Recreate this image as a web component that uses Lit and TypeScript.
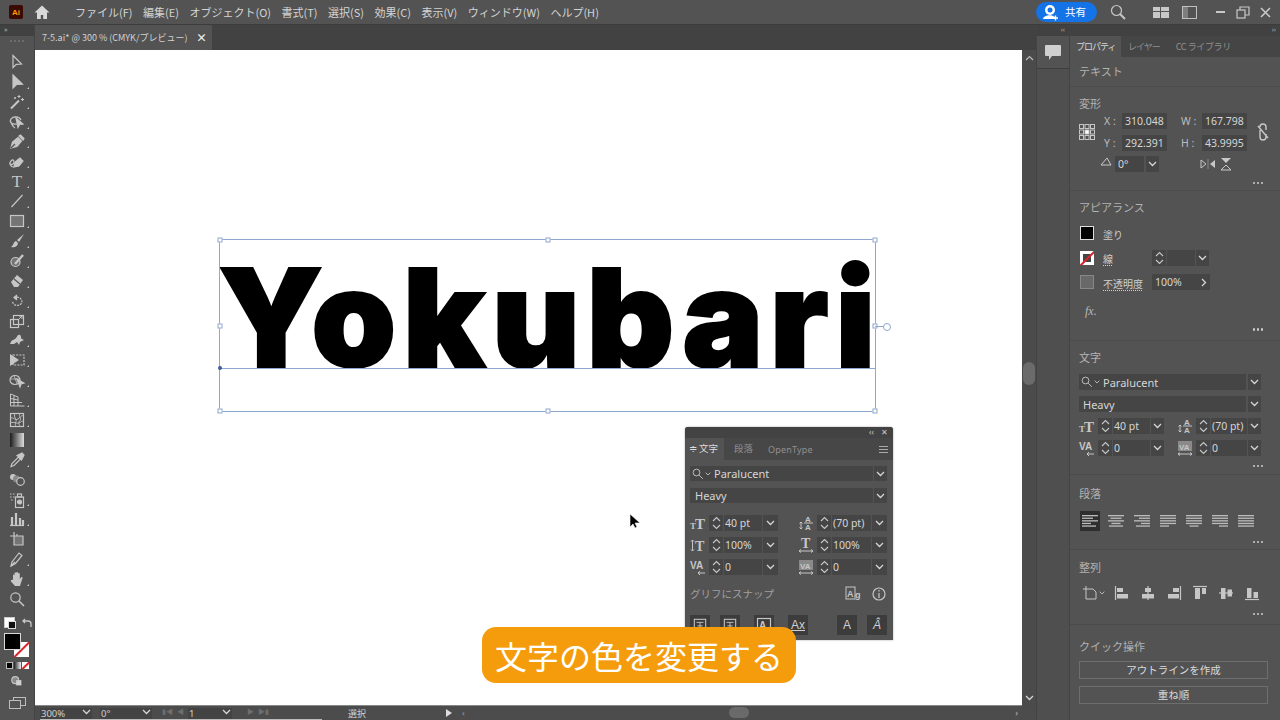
import { LitElement, html, css, svg } from "lit";
import { customElement } from "lit/decorators.js";

const G = "#c6c6c6";
const ic = (body: unknown, s = 16, vb = 16) =>
  html`<svg width=${s} height=${s} viewBox="0 0 ${vb} ${vb}" fill="none" stroke=${G} stroke-width="1.2">${body}</svg>`;

const chevron = html`<svg class="chev" width="9" height="6" viewBox="0 0 9 6" fill="none" stroke="#d6d6d6" stroke-width="1.3"><path d="M1 1l3.500 3.500L8 1"/></svg>`;
const spinner = html`<svg width="9" height="14" viewBox="0 0 9 14" fill="none" stroke="#c8c8c8" stroke-width="1.1"><path d="M1 5l3.500-3.500L8 5M1 9l3.500 3.500L8 9"/></svg>`;
const dots = html`<div class="dots"><i></i><i></i><i></i></div>`;
const serif = (x: number, y: number, size: number, t: string) =>
  svg`<text x=${x} y=${y} font-size=${size} font-family="Liberation Serif" font-weight="700" fill=${G} stroke="none">${t}</text>`;
const sans = (x: number, y: number, size: number, t: string) =>
  svg`<text x=${x} y=${y} font-size=${size} font-family="Liberation Sans" font-weight="700" fill=${G} stroke="none">${t}</text>`;

const fieldIcons = {
  size: ic(svg`${serif(0, 14, 9, "T")}${serif(5, 14, 15, "T")}`),
  lead: ic(svg`${sans(7, 7, 8, "A")}${sans(7, 15, 8, "A")}<path d="M6 8h9M3 7v7M1.500 8.500L3 7l1.500 1.500M1.500 12.500L3 14l1.500-1.500" stroke-width="1"/>`),
  vs: ic(svg`${serif(5, 14, 14, "T")}<path d="M2.500 3v11M1 4.500l1.500-1.500L4 4.500M1 12.500L2.500 14 4 12.500" stroke-width="1"/>`),
  hs: ic(svg`${serif(3, 11, 14, "T")}<path d="M1 14h14M3 12.500L1 14l2 1.500M13 12.500L15 14l-2 1.500" stroke-width="1"/>`),
  kern: ic(svg`${sans(0, 10, 10, "V")}${sans(6, 10, 10, "A")}<path d="M8 14h7M10 12l-2 2 2 2" stroke-width="1"/>`),
  track: ic(svg`<rect x="1" y="1" width="14" height="10" fill="#8a8a8a" stroke="none"/>${sans(2, 10, 8, "VA")}<path d="M1 14h14M3 12.500L1 14l2 1.500M13 12.500L15 14l-2 1.500" stroke-width="1"/>`),
};

const tools: [unknown, boolean][] = [
  [svg`<path d="M4 1.500v12l3.300-3.200 5.200-.300z"/>`, false],
  [svg`<path d="M4 1v13l3.500-3.500 6-.300z" fill=${G}/>`, true],
  [svg`<path d="M2 14.500l8-8" stroke-width="2"/><path d="M10 1v3M8.500 2.500h3M13.500 4v3M12 5.500h3M6 3v2M5 4h2" stroke-width="1"/>`, true],
  [svg`<path d="M8 10C3 11 0 8 2 5s8-3 10 1M3 9c-1 2 1 3 3 5"/><path d="M7 4l7 6-3.500.500-1.500 3z" fill=${G}/>`, true],
  [svg`<path d="M2 14l1.500-6L9 3.500l3.500 3.500L8 12.500z" fill=${G}/><path d="M10 2l1.500-1 3.500 3.500-1 1.500z" fill=${G}/><path d="M2 14l4-4" stroke="#535353"/>`, true],
  [svg`<path d="M5 14l1-5 5-4 3 3-4 5z" fill=${G}/><path d="M5 14C1 14 0 10 2 8s3-1 3 1-2 3-3 2"/>`, true],
  [svg`<text x="8" y="14" font-size="17" text-anchor="middle" font-family="Liberation Serif" fill=${G} stroke="none">T</text>`, true],
  [svg`<path d="M2.500 14L13.500 2"/>`, true],
  [svg`<rect x="1.500" y="2.500" width="13" height="11" fill="#747474"/>`, true],
  [svg`<path d="M15 1L8 7l2 2zM7 8C4 9 5 12 2 14c4 1 7-1 7-4z" fill=${G} stroke="none"/>`, true],
  [svg`<circle cx="6.500" cy="9" r="4.500" fill="#747474"/><path d="M6 11l8-9" stroke-width="2.400"/>`, true],
  [svg`<path d="M2 9l6-7 6 5-5 7H5z" fill=${G} stroke="none"/><path d="M5 6l6 5" stroke="#535353"/>`, true],
  [svg`<path d="M3.500 9A5 5 0 0 0 13 9a5 5 0 0 0-7-4.500" stroke-dasharray="2 1" /><path d="M8 2L5 4.500 8 7" fill=${G}/>`, true],
  [svg`<rect x="1.500" y="6.500" width="8" height="8"/><rect x="4.500" y="2.500" width="10" height="9"/><path d="M9 7l4-4M10 3h3v3" stroke-width="1"/>`, true],
  [svg`<path d="M1 12c2-6 4-3 6-6s2-4 4-3 0 3 2 4l2 1-2 1-2 1-1 3-2-3-3 2z" fill=${G} stroke="none"/>`, true],
  [svg`<rect x="4" y="3" width="11" height="10" stroke-dasharray="2 1.200"/><path d="M1 2l9 6-9 6z" fill=${G} stroke="none"/>`, true],
  [svg`<ellipse cx="6" cy="8" rx="5" ry="4.500"/><path d="M1.500 7h9M5 3.500l3 8"  stroke-width=".8"/><path d="M8 7l7 4-3 1-1 3z" fill=${G}/>`, true],
  [svg`<path d="M1.500 2v12h14M1.500 2L9 5v9M5 3.500V14M1.500 6.500L9 8M1.500 10.500H13" stroke-width="1"/>`, true],
  [svg`<rect x="1.500" y="1.500" width="13" height="13"/><path d="M1.500 6C5 5 6 9 9 7s3-4 5.500-3M1.500 11c4-2 5 1 8 0s3-2 5-2M6 1.500c-2 4 2 5 1 8s-1 3 0 5M11 1.500c-2 3 2 5 0 7s-1 4 0 6" stroke-width=".9"/>`, true],
  [svg`<defs><linearGradient id="gr"><stop offset="0" stop-color="#1c1c1c"/><stop offset="1" stop-color="#dcdcdc"/></linearGradient></defs><rect x="1" y="1" width="14" height="14" fill="url(#gr)" stroke="none"/>`, false],
  [svg`<path d="M2 14.500l1-3L9.500 5l2 2L5 13.500z"/><path d="M8 3.500L13 1l2 2-2.500 5z" fill=${G}/>`, true],
  [svg`<circle cx="4" cy="5" r="3" fill=${G} stroke="none"/><circle cx="7.500" cy="7" r="3.500" fill="#8a8a8a" stroke="none"/><circle cx="11.500" cy="9.500" r="3.800" fill="#535353"/>`, false],
  [svg`<rect x="6.500" y="5" width="8" height="10.500"/><circle cx="10.500" cy="10" r="2" fill=${G}/><rect x="8.500" y="2" width="4" height="3"/><path d="M1 2h1.500M4 2h1.500M1 5h1.500M4 5h1.500M2 8h1.500" stroke-width="1.200"/>`, true],
  [svg`<path d="M1 14.500h14" /><path d="M3 14V6M7 14V2M11 14V7M14 14V9" stroke-width="2.200"/>`, true],
  [svg`<path d="M5 1v4M1 5h4M8 3v2" /><path d="M5 5h9v9H5z" fill="#747474"/>`, false],
  [svg`<path d="M2 15l1-4L10 2l3 2.500-6.500 8z"/><path d="M2 15l4-4" />`, true],
  [svg`<path d="M4 9V4.500c0-1.300 1.500-1.300 1.500 0V2.500c0-1.400 1.800-1.400 1.800 0V2c0-1.300 1.800-1.300 1.800 0v1c0-1.200 1.700-1.200 1.700 0v5l1.200-1.500c1-1 2 0 1.400 1L11 15H6L2 10.500c-.8-1.300.8-2.500 2-1.500z" fill=${G} stroke="none"/>`, true],
  [svg`<circle cx="6.500" cy="6.500" r="4.700"/><path d="M10 10l5 5" stroke-width="1.600"/>`, false],
];

const menus = ["ファイル(F)", "編集(E)", "オブジェクト(O)", "書式(T)", "選択(S)", "効果(C)", "表示(V)", "ウィンドウ(W)", "ヘルプ(H)"];

const alignLines: number[][] = [
  [16, 11, 16, 9, 14],
  [16, 11, 16, 9, 14],
  [16, 11, 16, 9, 14],
  [16, 16, 16, 16, 9],
  [16, 16, 16, 16, 9],
  [16, 16, 16, 16, 9],
  [16, 16, 16, 16, 16],
];
const alignKind = ["l", "c", "r", "l", "c", "r", "l"];
const paraIcon = (i: number) => {
  const k = alignKind[i];
  return ic(
    alignLines[i].map((w, n) => {
      const x = k === "l" ? 0 : k === "c" ? (16 - w) / 2 : 16 - w;
      return svg`<rect x=${x} y=${2 + n * 2.6} width=${w} height="1.300" fill="#bcbcbc" stroke="none"/>`;
    }),
  );
};

const distIcons = [
  svg`<path d="M1.500 1v14" /><rect x="3" y="3" width="6" height="4" fill=${G} stroke="none"/><rect x="3" y="9" width="11" height="4.500" fill=${G} stroke="none"/>`,
  svg`<path d="M8 1v14"/><rect x="5" y="3" width="6" height="4" fill=${G} stroke="none"/><rect x="2" y="9" width="12" height="4.500" fill=${G} stroke="none"/>`,
  svg`<path d="M14.500 1v14"/><rect x="7" y="3" width="6" height="4" fill=${G} stroke="none"/><rect x="2" y="9" width="11" height="4.500" fill=${G} stroke="none"/>`,
  svg`<path d="M1 1.500h14"/><rect x="3" y="3" width="5" height="11" fill=${G} stroke="none"/><rect x="10" y="3" width="4" height="6" fill=${G} stroke="none"/>`,
  svg`<path d="M1 8h14"/><rect x="3" y="3" width="4.500" height="11" fill=${G} stroke="none"/><rect x="9.500" y="4.500" width="4.500" height="7" fill=${G} stroke="none"/>`,
  svg`<path d="M1 14.500h14"/><rect x="3" y="3" width="4.500" height="10" fill=${G} stroke="none"/><rect x="9.500" y="7" width="4.500" height="6" fill=${G} stroke="none"/>`,
];

const handles: [number, number][] = [
  [0, 0], [50, 0], [100, 0], [0, 50], [100, 50], [0, 100], [50, 100], [100, 100],
];

const magnify = html`<span class="mag">${ic(svg`<circle cx="6" cy="6" r="4.500"/><path d="M9.500 9.500l5 5"/>`, 12)}<svg width="6" height="4" viewBox="0 0 9 6" fill="none" stroke="#c8c8c8" stroke-width="1.300"><path d="M1 1l3.500 3.500L8 1"/></svg></span>`;

@customElement("app-root")
export class AppRoot extends LitElement {
  static styles = css`
    :host { display: block; width: 1280px; height: 720px; overflow: hidden; background: #535353; color: #cfcfcf;
      font-family: "Noto Sans", "Noto Sans CJK JP", sans-serif; font-size: 11px; line-height: 1; }
    * { box-sizing: border-box; }
    svg { display: block; flex: none; overflow: visible; }
    .menubar { height: 25px; display: flex; align-items: center; background: #535353; border-bottom: 1px solid #3c3c3c; }
    .logo { width: 14px; height: 14px; margin: 0 0 0 9px; border-radius: 2px; background: #3a0a03; color: #ff9a00; font: 700 8px "Liberation Sans", sans-serif; display: flex; align-items: center; justify-content: center; }
    .home { margin-left: 11px; margin-right: 25px; }
    .menus { display: flex; gap: 10.500px; font-size: 11px; color: #d4d4d4; font-family: "Noto Sans CJK JP", sans-serif; flex: 1; }
    .share { width: 61px; height: 20px; border-radius: 10px; background: #1473e6; display: flex; align-items: center; gap: 6px; padding-left: 6px; color: #fff; font-size: 10.500px; font-family: "Noto Sans CJK JP", sans-serif; }
    .topr { display: flex; align-items: center; }
    .m1 { margin-left: 13px; } .m2 { margin-left: 27px; } .m3 { margin-left: 13px; } .m4 { margin-left: 19px; } .m5 { margin-left: 8px; } .m6 { margin-left: 10px; margin-right: 9px; }
    .main { display: flex; height: 695px; }
    .toolbar { width: 35px; flex: none; display: flex; flex-direction: column; align-items: center; background: #535353; border-right: 1px solid #444; }
    .strip { height: 11px; flex: none; width: 100%; background: #414141; color: #aaa; font-size: 7px; padding: 1px 4px; align-self: stretch; }
    .strip.r { text-align: right; }
    .grip { height: 12px; flex: none; width: 14px; margin-top: 4px; border-top: 2px dotted #6d6d6d; }
    .tool { height: 19.900px; flex: none; width: 100%; display: flex; align-items: center; justify-content: center; position: relative; }
    .tool.more::after { content: ""; position: absolute; right: 5px; bottom: 3px; border: 1.500px solid transparent; border-right-color: #c6c6c6; border-bottom-color: #c6c6c6; }
    .colors { position: relative; flex: none; width: 35px; height: 45px; margin-top: 6px; }
    .mini1 { position: absolute; left: 4px; top: 2px; width: 11px; height: 11px; background: #fff; border: 1px solid #ccc; }
    .mini2 { position: absolute; left: 8px; top: 6px; width: 8px; height: 8px; background: #111; border: 1px solid #ddd; }
    .swap { position: absolute; left: 22px; top: 3px; }
    .stroke { position: absolute; left: 14px; top: 27px; width: 15px; height: 15px; background: #fff; overflow: hidden; }
    .stroke::after, .mini-none::after, .strokesw::after { content: ""; position: absolute; left: -4px; right: -4px; top: 50%; height: 2px; background: #d8272d; transform: rotate(-45deg); }
    .fill { position: absolute; left: 4px; top: 18px; width: 17px; height: 17px; background: #000; border: 1.500px solid #d8d8d8; }
    .minis { display: flex; gap: 1px; height: 7px; margin-top: 2px; flex: none; }
    .minis > * { width: 7px; height: 7px; position: relative; overflow: hidden; }
    .mini-b { background: #000; border: 1px solid #bbb; }
    .mini-g { background: linear-gradient(90deg, #222, #eee); }
    .mini-none { background: #fff; }
    .under { margin-top: 5px; flex: none; }
    .under2 { margin-top: 9px; flex: none; }
    .center { width: 1001px; flex: none; display: flex; flex-direction: column; }
    .tabs { height: 25px; display: flex; background: #424242; }
    .tab { width: 177px; background: #535353; display: flex; align-items: center; justify-content: space-between; padding: 0 5px 0 7px; font-size: 9px; font-family: "Noto Sans CJK JP", sans-serif; color: #d2d2d2; }
    .tab b { color: #eee; font-size: 11px; }
    .canvasrow { height: 656px; display: flex; }
    .canvas { flex: 1; background: #fff; position: relative; overflow: hidden; border-bottom: 1px solid #888; }
    .vscroll { width: 14px; flex: none; background: #4b4b4b; position: relative; display: flex; flex-direction: column; justify-content: space-between; align-items: center; padding: 5px 0; }
    .vthumb { position: absolute; left: 1px; top: 312px; width: 12px; height: 23px; background: #6b6b6b; border-radius: 6px; }
    .status { height: 14px; display: flex; background: #4c4c4c; position: relative; overflow: hidden; font-size: 9.500px; color: #d0d0d0; }
    .stl { width: 282px; margin-left: 5px; display: flex; align-items: flex-start; padding-top: 2px; border-bottom: 1px solid #bbb; }
    .stl .v { background: #434343; height: 11px; padding: 1px; display: flex; justify-content: space-between; }
    .v1 { width: 52px; margin-right: 8px; } .v2 { width: 52px; margin-right: 10px; } .v4 { width: 44px; margin-right: 15px; }
    .nav { display: flex; width: 24px; gap: 4px; margin-right: 2px; color: #6e6e6e; font-size: 7px; }
    .mode { width: 70px; text-align: center; font-size: 9px; padding-top: 3px; font-family: "Noto Sans CJK JP", sans-serif; }
    .tri { width: 0; height: 0; border: 4px solid transparent; border-left: 6px solid #ddd; margin: 3px 0 0 54px; }
    .lt { color: #999; margin: 2px 0 0 6px; font-size: 9px; }
    .hthumb { position: absolute; left: 694px; top: 1px; width: 20px; height: 11px; border-radius: 6px; background: #6a6a6a; }
    .hr { position: absolute; right: 18px; top: 2px; color: #bdbdbd; font-size: 9px; }
    .dock { width: 34px; flex: none; background: #4f4f4f; border-left: 1px solid #434343; border-right: 1px solid #434343; }
    .cmt { height: 33px; background: #535353; border-bottom: 1px solid #3e3e3e; display: flex; align-items: center; justify-content: center; }
    .panel { width: 210px; flex: none; background: #535353; }
    .ptabs { height: 21px; background: #454545; display: flex; align-items: center; font-family: "Noto Sans CJK JP", sans-serif; font-size: 9px; color: #8f8f8f; white-space: nowrap; letter-spacing: -1px; }
    .ptab { height: 100%; flex: none; display: flex; align-items: center; padding: 0 6px; }
    .ptab.on { background: #535353; color: #d8d8d8; width: 51px; margin-right: 1px; padding: 0 0 0 6px; }
    .ptab.lib { padding-left: 7px; margin-left: 3px; padding-right: 9px; letter-spacing: -.4px; }
    .sec { padding: 8px 19px 0 9px; border-bottom: 1px solid #4b4b4b; }
    .h { height: 16px; display: flex; align-items: center; color: #b2b2b2; font-size: 11px; font-family: "Noto Sans CJK JP", sans-serif; }
    .s0 { height: 30px; padding-top: 6px; }
    .s1 { height: 104px; } .s2 { height: 150px; } .s3 { height: 134px; }
    .s4 { height: 75px; padding-top: 10px; } .s5 { height: 75px; padding-top: 9px; } .s6 { padding: 13px 12px 0 9px; border: 0; }
    .dots { display: flex; justify-content: flex-end; gap: 1.500px; height: 8px; align-items: center; margin-right: -2px; }
    .dots i { width: 2.500px; height: 2.500px; border-radius: 50%; background: #cdcdcd; }
    .inp { background: #454545; height: 16px; display: flex; align-items: center; padding-left: 3px; color: #d6d6d6; font-size: 10.500px; white-space: nowrap; overflow: hidden; }
    .tf { display: grid; grid-template-columns: 16px 27px 45px 14px 21px 45px 22px; align-items: center; margin-top: 2px; row-gap: 6px; }
    .tfref { grid-row: 1 / 3; }
    .lb { color: #bcbcbc; padding-left: 9px; white-space: nowrap; font-size: 10.500px; }
    .lb2 { color: #bcbcbc; white-space: nowrap; font-size: 10.500px; }
    .link { grid-row: 1 / 3; grid-column: 7; justify-self: end; }
    .tf3 { display: flex; align-items: center; margin: 5px 0 7px 21px; height: 16px; }
    .tf3 .ang { margin-bottom: 5px; }
    .tf3 .a { width: 29px; margin-left: 3px; }
    .dd { width: 13px; height: 16px; background: #454545; display: flex; align-items: center; justify-content: center; }
    .tf3 .dd { margin-left: 2px; margin-right: 41px; }
    .flip { margin-right: 4px; }
    .ar { display: flex; align-items: center; height: 24.500px; position: relative; }
    .ar.first { margin-top: 6px; }
    .sw { width: 14px; height: 14px; background: #000; border: 1px solid #ddd; margin-left: 1px; }
    .strokesw { width: 14px; height: 14px; background: #fff; position: relative; overflow: hidden; margin-left: 1px; }
    .strokesw i { position: absolute; inset: 3px; background: #454545; }
    .opsw { width: 14px; height: 14px; background: #696969; border: 1px solid #888; margin-left: 1px; }
    .al { margin-left: 9px; width: 49px; color: #cfcfcf; font-size: 10px; font-family: "Noto Sans CJK JP", sans-serif; padding-top: 3px; white-space: nowrap; }
    .ul { text-decoration: underline dotted; text-underline-offset: 2px; }
    .sp { width: 14px; height: 16px; background: #454545; display: flex; align-items: center; justify-content: center; }
    .blank { width: 28px; height: 16px; background: #454545; margin: 0 1px; }
    .pct { width: 45px; background: #454545; }
    .fx { font: italic 12px "Liberation Serif", serif; color: #b8b8b8; margin: 7px 0 4px 6px; height: 20px; display: flex; align-items: center; }
    .frow { display: grid; grid-template-columns: 1fr 13px; gap: 2px; margin-top: 6px; }
    .frow.first { margin-top: 9px; }
    .frow .inp { padding-left: 2px; font-size: 11px; }
    .frow .st { padding-left: 4px; }
    .mag { display: flex; align-items: center; gap: 1px; margin-right: 3px; }
    .fgrid { display: grid; grid-template-columns: 85px 84px; column-gap: 13px; row-gap: 6px; margin: 6px 0 0; }
    .fld { display: grid; grid-template-columns: 18px 14px 1fr 13px; column-gap: 1px; align-items: center; }
    .fld .inp { padding-left: 1px; }
    .d1 { margin-top: 6px; }
    .alrow { display: flex; height: 20px; margin-top: 10px; align-items: center; gap: 6px; margin-left: 1px; width: 182px; }
    .alrow .on { background: #2e2e2e; }
    .alcell { width: 20px; height: 20px; display: flex; align-items: center; justify-content: center; }
    .alrow.d { margin-top: 8px; margin-left: 3px; }
    .dtop { display: flex; align-items: center; gap: 1px; width: 24px; }
    .d2 { margin-top: 7px; }
    .btn { height: 18px; border: 1px solid #6e6e6e; display: flex; align-items: center; justify-content: center; color: #dadada; font-size: 10.500px; font-family: "Noto Sans CJK JP", sans-serif; margin-top: 7px; }
    .yk { position: absolute; left: 183px; top: 200px; font: 900 136px/1 "Inter", sans-serif; letter-spacing: 6.500px; color: #000; white-space: nowrap; -webkit-text-stroke: 2px #000; }
    .box { position: absolute; left: 184px; top: 189px; width: 657px; height: 173px; border: 1px solid #8ea8cf; }
    .base { position: absolute; left: 0; right: 0; top: 128px; height: 1px; background: #8ea8cf; }
    .pt { position: absolute; left: -2px; top: 126px; width: 4px; height: 4px; border-radius: 50%; background: #3f5a9e; }
    .hd { position: absolute; width: 5px; height: 5px; background: #fff; border: 1px solid #8ea8cf; transform: translate(-50%, -50%); }
    .rot { position: absolute; left: 100%; top: 50%; width: 10px; height: 1px; background: #8ea8cf; }
    .rot::after { content: ""; position: absolute; left: 8px; top: -3px; width: 6px; height: 6px; border: 1px solid #8ea8cf; border-radius: 50%; background: #fff; }
    .cursor { position: absolute; left: 594px; top: 463px; }
    .float { position: absolute; left: 650px; top: 377px; width: 208px; height: 213px; background: #535353; border-radius: 3px 3px 0 0; box-shadow: 0 0 2px rgba(0,0,0,.4); }
    .ftitle { height: 11px; background: #434343; border-radius: 3px 3px 0 0; display: flex; justify-content: flex-end; gap: 7px; padding: 1px 5px 0 0; color: #ccc; font-size: 8px; }
    .ftabs { height: 22px; background: #474747; display: flex; align-items: center; color: #8f8f8f; font-size: 9.500px; font-family: "Noto Sans CJK JP", sans-serif; white-space: nowrap; }
    .ftab { height: 100%; display: flex; align-items: center; padding: 0 10px; }
    .ftab.on { background: #535353; color: #dcdcdc; width: 39px; padding: 0 0 0 4px; gap: 2px; }
    .ftab.ot { font-family: "Noto Sans", sans-serif; letter-spacing: .2px; padding: 0 0 0 5px; font-size: 9px; }
    .burger { margin-left: auto; margin-right: 5px; width: 9px; height: 7px; border-top: 1px solid #aaa; border-bottom: 1px solid #aaa; position: relative; }
    .burger::after { content: ""; position: absolute; left: 0; right: 0; top: 2px; height: 1px; background: #aaa; }
    .fb { padding: 6px 6px 0 5px; }
    .ffr { display: grid; grid-template-columns: 1fr 13px; gap: 1px; margin-bottom: 7px; height: 15px; }
    .ffr .inp { height: 15px; font-size: 11px; padding-left: 2px; }
    .ffr .st { padding-left: 5px; }
    .ffr .dd { height: 15px; }
    .fg2 { display: grid; grid-template-columns: 88px 89px; column-gap: 20px; row-gap: 6px; margin-top: 12px; }
    .fg2 .fld { grid-template-columns: 18px 14px 1fr 15px; }
    .fg2 .dd { width: 15px; }
    .snap { display: flex; align-items: center; margin-top: 11px; height: 16px; color: #9f9f9f; font-family: "Noto Sans CJK JP", sans-serif; font-size: 10.500px; }
    .snap span { flex: 1; }
    .snap svg { margin-left: 10px; }
    .gly { display: flex; margin-top: 13px; }
    .g { width: 20px; height: 20px; background: #3c3c3c; color: #cfcfcf; display: flex; align-items: center; justify-content: center; font: 12px "Liberation Sans", sans-serif; }
    .ga { margin-right: 10px; } .gb { margin-right: 14px; } .gc { margin-right: 29px; }
    .cap { position: absolute; left: 447px; top: 577px; width: 314px; height: 56px; background: #f59c0d; border-radius: 14px; color: #fff; display: flex; align-items: center; justify-content: center; font-size: 32px; font-family: "Noto Sans CJK JP", sans-serif; font-weight: 400; }
  `;

  field(icon: unknown, val: string) {
    return html`<div class="fld">${icon}<div class="sp">${spinner}</div><div class="inp">${val}</div><div class="dd">${chevron}</div></div>`;
  }

  render() {
    return html`
      <div class="menubar">
        <div class="logo">Ai</div>
        <div class="home">${ic(svg`<path d="M8 1.500L.5 8.500h2.500V15h3.800v-4h2.400v4H13V8.500h2.500z" fill="#d8d8d8" stroke="none"/>`)}</div>
        <div class="menus">${menus.map((m) => html`<span>${m}</span>`)}</div>
        <div class="topr">
          <div class="share">
            <svg width="17" height="17" viewBox="0 0 17 17"><circle cx="8" cy="6" r="5" fill="#fff"/><path d="M1 15c1-5 12-5 13 0z" fill="#fff"/><circle cx="8" cy="6" r="2.500" fill="#1473e6"/><path d="M11 14h5M13.500 11.500v5" stroke="#fff" stroke-width="1.400"/></svg>
            共有
          </div>
          <div class="m1">${ic(svg`<circle cx="6.500" cy="6.500" r="5"/><path d="M10 10l5 5" stroke-width="2"/>`, 16)}</div>
          <svg class="m2" width="16" height="12" viewBox="0 0 16 12"><path d="M0 1h7v4H0zM8 1h8v4H8zM0 6h7v6H0zM8 6h8v6H8z" fill="#c8c8c8"/></svg>
          <svg class="m3" width="15" height="13" viewBox="0 0 15 13"><rect x=".5" y=".5" width="14" height="12" fill="none" stroke="#c0c0c0"/><rect x="1" y="1" width="5" height="11" fill="#c0c0c0" opacity=".4"/></svg>
          <svg class="m4" width="12" height="3" viewBox="0 0 12 3"><rect width="9" height="2" fill="#c8c8c8"/></svg>
          <svg class="m5" width="14" height="13" viewBox="0 0 14 13" fill="none" stroke="#c8c8c8" stroke-width="1.200"><rect x="1" y="4" width="8" height="8"/><path d="M4 4V1h9v8h-4"/></svg>
          <svg class="m6" width="11" height="11" viewBox="0 0 11 11" fill="none" stroke="#c8c8c8" stroke-width="1.600"><path d="M1 1l9 9M10 1l-9 9"/></svg>
        </div>
      </div>
      <div class="main">
        <div class="toolbar">
          <div class="strip">»</div>
          <div class="grip"></div>
          ${tools.map(([b, more]) => html`<div class="tool ${more ? "more" : ""}">${ic(b, 16)}</div>`)}
          <div class="colors">
            <div class="mini1"></div><div class="mini2"></div>
            <svg class="swap" width="10" height="10" viewBox="0 0 10 10" fill="none" stroke="#c8c8c8" stroke-width="1.300"><path d="M1 3h5a3 3 0 0 1 3 3v3M3 1L1 3l2 2"/></svg>
            <div class="stroke"></div>
            <div class="fill"></div>
          </div>
          <div class="minis"><div class="mini-b"></div><div class="mini-g"></div><div class="mini-none"></div></div>
          <div class="under">${ic(svg`<circle cx="6" cy="7" r="4" fill="#8a8a8a"/><rect x="7" y="7" width="6" height="6" fill="#d0d0d0" stroke="none"/>`, 14, 16)}</div>
          <div class="under2">
            <svg width="17" height="12" viewBox="0 0 17 12" fill="none" stroke="#bdbdbd"><rect x="4.500" y=".5" width="12" height="8"/><rect x=".5" y="3.500" width="11" height="8" fill="#535353"/></svg>
          </div>
        </div>
        <div class="center">
          <div class="tabs"><div class="tab"><span>7-5.ai* @ 300 % (CMYK/プレビュー)</span><b>×</b></div></div>
          <div class="canvasrow">
            <div class="canvas">
              <div class="yk">Yokubari</div>
              <div class="box">
                <div class="base"></div><div class="pt"></div>
                ${handles.map(([x, y]) => html`<div class="hd" style="left:${x}%;top:${y}%"></div>`)}
                <div class="rot"></div>
              </div>
              <svg class="cursor" width="12" height="16" viewBox="0 0 12 16"><path d="M1 1v13l3-3 2 4 2-1-2-4h5z" fill="#000" stroke="#fff" stroke-width=".6"/></svg>
              ${this.renderFloat()}
              <div class="cap">文字の色を変更する</div>
            </div>
            <div class="vscroll">
              <svg width="9" height="6" viewBox="0 0 9 6" fill="none" stroke="#bbb" stroke-width="1.200"><path d="M1 5l3.500-3.500L8 5"/></svg>
              <div class="vthumb"></div>
              ${chevron}
            </div>
          </div>
          <div class="status">
            <div class="stl">
              <div class="v v1"><span>300%</span>${chevron}</div>
              <div class="v v2"><span>0°</span>${chevron}</div>
              <div class="nav"><span>▮◀</span><span>◀</span></div>
              <div class="v v4"><span>1</span>${chevron}</div>
              <div class="nav"><span>▶</span><span>▶▮</span></div>
            </div>
            <div class="mode">選択</div>
            <div class="tri"></div>
            <div class="lt">‹</div>
            <div class="hthumb"></div>
            <div class="hr">›</div>
          </div>
        </div>
        <div class="dock">
          <div class="strip r">‹‹</div>
          <div class="cmt">
            <svg width="16" height="15" viewBox="0 0 16 15"><path d="M1 0h14a1 1 0 0 1 1 1v9a1 1 0 0 1-1 1H7l-3 4v-4H1a1 1 0 0 1-1-1V1a1 1 0 0 1 1-1z" fill="#d0d0d0"/></svg>
          </div>
        </div>
        <div class="panel">
          <div class="strip r">››</div>
          <div class="ptabs">
            <div class="ptab on">プロパティ</div>
            <div class="ptab">レイヤー</div>
            <div class="ptab lib">CC ライブラリ</div>
          </div>
          <div class="sec s0"><div class="h">テキスト</div></div>
          <div class="sec s1">
            <div class="h">変形</div>
            <div class="tf">
              <svg class="tfref" width="16" height="16" viewBox="0 0 16 16" fill="none" stroke="#c8c8c8"><rect x=".5" y=".5" width="4" height="4"/><rect x="6" y=".5" width="4" height="4"/><rect x="11.500" y=".5" width="4" height="4"/><rect x=".5" y="6" width="4" height="4"/><rect x="6" y="6" width="4" height="4" fill="#fff"/><rect x="11.500" y="6" width="4" height="4"/><rect x=".5" y="11.500" width="4" height="4"/><rect x="6" y="11.500" width="4" height="4"/><rect x="11.500" y="11.500" width="4" height="4"/></svg>
              <div class="lb">X :</div><div class="inp">310.048</div><div></div><div class="lb2">W :</div><div class="inp">167.798</div>
              <svg class="link" width="12" height="16" viewBox="0 0 12 16" fill="none" stroke="#c8c8c8" stroke-width="1.400"><path d="M3 3a3 3 0 0 1 6 0v3M3 6v7a3 3 0 0 0 6 0v-3M1 2l10 12"/></svg>
              <div class="lb">Y :</div><div class="inp">292.391</div><div></div><div class="lb2">H :</div><div class="inp">43.9995</div>
            </div>
            <div class="tf3">
              <svg class="ang" width="12" height="9" viewBox="0 0 12 9" fill="none" stroke="#c8c8c8"><path d="M1 8h10L7 1z"/></svg>
              <div class="inp a">0°</div><div class="dd">${chevron}</div>
              <svg class="flip" width="16" height="10" viewBox="0 0 16 10"><path d="M1 1l5 4-5 4z" fill="none" stroke="#c8c8c8"/><path d="M15 1l-5 4 5 4z" fill="#c8c8c8"/><path d="M8 0v10" stroke="#888"/></svg>
              <svg class="flip" width="12" height="14" viewBox="0 0 12 14"><path d="M1 1h10L6 6z" fill="#c8c8c8"/><path d="M1 13h10L6 8z" fill="none" stroke="#c8c8c8"/></svg>
            </div>
            ${dots}
          </div>
          <div class="sec s2">
            <div class="h">アピアランス</div>
            <div class="ar first"><div class="sw"></div><div class="al">塗り</div></div>
            <div class="ar"><div class="strokesw"><i></i></div><div class="al ul">線</div><div class="sp">${spinner}</div><div class="blank"></div><div class="dd">${chevron}</div></div>
            <div class="ar"><div class="opsw"></div><div class="al ul">不透明度</div><div class="inp pct">100%</div><div class="dd"><svg width="6" height="9" viewBox="0 0 6 9" fill="none" stroke="#d6d6d6" stroke-width="1.300"><path d="M1 1l3.500 3.500L1 8"/></svg></div></div>
            <div class="fx">fx.</div>
            ${dots}
          </div>
          <div class="sec s3">
            <div class="h">文字</div>
            <div class="frow first"><div class="inp">${magnify}Paralucent</div><div class="dd">${chevron}</div></div>
            <div class="frow"><div class="inp st">Heavy</div><div class="dd">${chevron}</div></div>
            <div class="fgrid">
              ${this.field(fieldIcons.size, "40 pt")}${this.field(fieldIcons.lead, "(70 pt)")}
              ${this.field(fieldIcons.kern, "0")}${this.field(fieldIcons.track, "0")}
            </div>
            <div class="d1">${dots}</div>
          </div>
          <div class="sec s4">
            <div class="h">段落</div>
            <div class="alrow">${[0, 1, 2, 3, 4, 5, 6].map((i) => html`<div class="alcell ${i === 0 ? "on" : ""}">${paraIcon(i)}</div>`)}</div>
            <div class="d2">${dots}</div>
          </div>
          <div class="sec s5">
            <div class="h">整列</div>
            <div class="alrow d">
              <div class="dtop">${ic(svg`<path d="M4 1v3M1 4h3M4 4v10h10V7l-3-3z" stroke-width="1"/>`)}<svg width="6" height="4" viewBox="0 0 9 6" fill="none" stroke="#c8c8c8" stroke-width="1.300"><path d="M1 1l3.500 3.500L8 1"/></svg></div>
              ${distIcons.map((d) => html`<div class="alcell">${ic(d)}</div>`)}
            </div>
            <div class="d2">${dots}</div>
          </div>
          <div class="sec s6">
            <div class="h">クイック操作</div>
            <div class="btn">アウトラインを作成</div>
            <div class="btn">重ね順</div>
          </div>
        </div>
      </div>
    `;
  }

  renderFloat() {
    return html`<div class="float">
      <div class="ftitle"><span>‹‹</span><span>✕</span></div>
      <div class="ftabs">
        <div class="ftab on"><span>≑</span><span>文字</span></div>
        <div class="ftab">段落</div>
        <div class="ftab ot">OpenType</div>
        <div class="burger"></div>
      </div>
      <div class="fb">
        <div class="ffr"><div class="inp">${magnify}Paralucent</div><div class="dd">${chevron}</div></div>
        <div class="ffr"><div class="inp st">Heavy</div><div class="dd">${chevron}</div></div>
        <div class="fg2">
          ${this.field(fieldIcons.size, "40 pt")}${this.field(fieldIcons.lead, "(70 pt)")}
          ${this.field(fieldIcons.vs, "100%")}${this.field(fieldIcons.hs, "100%")}
          ${this.field(fieldIcons.kern, "0")}${this.field(fieldIcons.track, "0")}
        </div>
        <div class="snap"><span>グリフにスナップ</span>
          ${ic(svg`<rect x="1" y="1" width="9" height="12" stroke-width="1"/>${sans(2, 11, 9, "A")}${sans(10, 12, 9, "g")}`, 16)}
          ${ic(svg`<circle cx="8" cy="8" r="6"/><path d="M8 7v5M8 4v1.500"/>`, 16)}
        </div>
        <div class="gly">
          <div class="g ga">${ic(svg`<rect x="1.500" y="1.500" width="13" height="13"/><path d="M4 5h8M8 5v7M5 9h6" stroke-width="1"/>`, 14)}</div>
          <div class="g gb">${ic(svg`<rect x="1.500" y="1.500" width="13" height="13"/><path d="M4 5h8M8 5v7M5 9h6" stroke-width="1"/>`, 14)}</div>
          <div class="g gb">${ic(svg`<rect x="1.500" y="1.500" width="13" height="13"/>${sans(3, 12, 10, "A")}`, 16)}</div>
          <div class="g gc"><u>Ax</u></div>
          <div class="g ga">A</div>
          <div class="g"><i>Â</i></div>
        </div>
      </div>
    </div>`;
  }
}
